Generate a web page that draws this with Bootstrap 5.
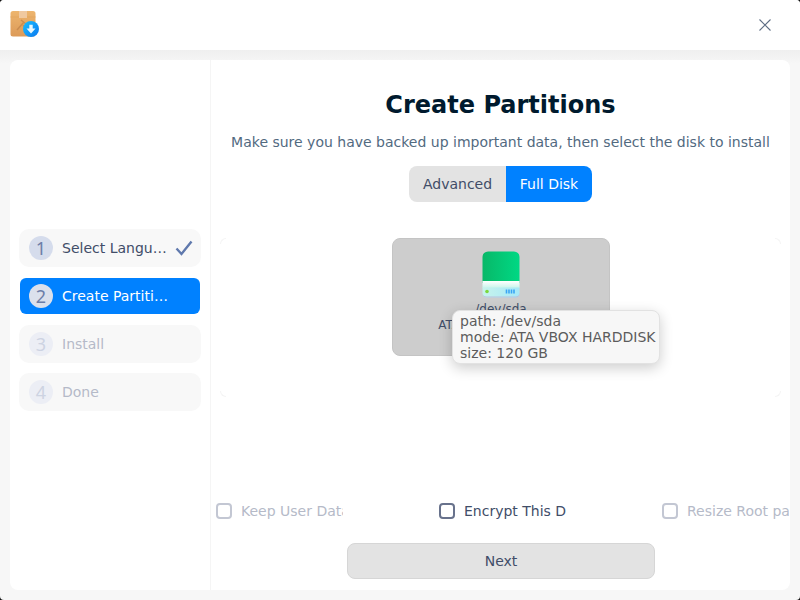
<!DOCTYPE html>
<html lang="en"><head><meta charset="utf-8"><title>Create Partitions</title>
<link href="https://cdn.jsdelivr.net/npm/bootstrap@5.3.0/dist/css/bootstrap.min.css" rel="stylesheet">
<style>
html,body{height:100%;margin:0;background:#111;overflow:hidden}
body{font-family:"DejaVu Sans","Liberation Sans",sans-serif;font-size:14px;color:#414d68}
.win{width:800px;height:600px;background:linear-gradient(#efefef 50px,#f7f7f7 64px);border-radius:4px;overflow:hidden}
.tbar{height:50px;background:#fff;padding-left:10px;padding-right:28px;flex:none}
.panel{margin:10px 10px 10px;height:530px;background:#fff;border-radius:8px;overflow:hidden}
.side{width:201px;border-right:1px solid #f5f5f5;padding:0 9px 10px;gap:10px}
.stp{height:38px;background:#f8f8f8;border-radius:10px;padding-left:10px;flex:none}
.stp.on{background:#0081ff;color:#fff;margin:1px;padding-left:9px;height:36px;border-radius:6px}
.stp.off{color:#b5bac8}
.num{width:24px;height:24px;border-radius:50%;background:#d5dcec;color:#6d7ea8;font-family:"Noto Sans",sans-serif;font-size:18px;line-height:24px;text-align:center;flex:none;margin-right:9px}
.stp.off .num{background:#eceef5;color:#cdd3e2}
.stp.on .num{background:#dbe0ec;color:#6d7ea8}
.lbl{width:106px;white-space:nowrap}
.chk{margin-left:7px}
.main{width:579px;position:relative}
.ttl{font-size:24px;font-weight:700;color:#001a2e;margin:29px 0 0;line-height:32px}
.sub{color:#526a7f;margin:12px 0 0;line-height:18px}
.seg{margin-top:15px;height:36px;border-radius:8px;overflow:hidden}
.seg span{display:block;line-height:36px;height:36px}
.seg .a{background:#e3e3e3;width:97px;text-align:center;color:#414d68}
.seg .b{background:#0081ff;color:#fff;width:86px;text-align:center}
.scroll{margin:36px 9px 0;height:159px;position:relative}
.crn{position:absolute;width:6px;height:6px;border:0 solid #f4f4f4}
.dsk{position:absolute;left:172px;top:0;width:218px;height:118px;background:#cdcdcd;border:1px solid #c4c4c4;border-radius:8px;text-align:center}
.dsk svg{display:block;margin:12px auto 0}
.dn{line-height:16px;margin-top:3px;font-size:12px}
.dn+.dn{margin-top:0}
.tip{position:absolute;left:232px;top:72px;width:208px;height:54px;background:#f7f7f7;border:1px solid #e2e2e2;border-radius:8px;box-shadow:0 4px 14px rgba(0,0,0,.2);color:#5c5c5c;padding:2px 0 0 7px;line-height:16px;white-space:nowrap;overflow:hidden;text-align:left}
.opts{position:absolute;left:5px;top:441px;width:574px}
.opt{width:127px;height:20px;overflow:hidden;white-space:nowrap;flex:none;gap:9px;margin-right:96px}
.opt input.form-check-input{width:16px;height:16px;margin:0;border-radius:4px;border:2px solid #68728c;background-color:transparent;flex:none;opacity:1}
.opt.off{color:#b5bac8}
.opt.off input.form-check-input{border-color:#c3c7d3}
.nxt{position:absolute;left:136px;top:483px;width:308px;height:36px;background:#e3e3e3;border:1px solid #d6d6d6;border-radius:8px;color:#414d68;font-size:14px;padding:0;line-height:34px}
.nxt:hover{background:#e3e3e3;color:#414d68;border-color:#d6d6d6}
</style></head>
<body>
<div class="win d-flex flex-column">
 <div class="tbar d-flex align-items-center justify-content-between">
  <svg width="30" height="30" viewBox="0 0 30 30">
   <defs><linearGradient id="bx" x1="0" y1="0" x2="0" y2="1"><stop offset="0" stop-color="#edb56e"/><stop offset="1" stop-color="#dc9a58"/></linearGradient>
   <linearGradient id="bl" x1="0" y1="0" x2="1" y2="1"><stop offset="0" stop-color="#19c0ff"/><stop offset="1" stop-color="#0a78f0"/></linearGradient></defs>
   <path d="M3 1h20a2.500 2.500 0 0 1 2.500 2.500V24a2.500 2.500 0 0 1-2.500 2.500H3A2.500 2.500 0 0 1 .5 24V3.500A2.500 2.500 0 0 1 3 1z" fill="url(#bx)"/>
   <path d="M.5 7h25" stroke="#e3a65f" stroke-width="1"/>
   <rect x="9" y="1" width="8" height="7" fill="#f0c9a0"/>
   <path d="M7 20l7-8M11 10l5 4M16 19l-3-4" stroke="#bf8249" stroke-width="1.500" fill="none" opacity=".7"/>
   <circle cx="21" cy="19" r="8" fill="url(#bl)"/>
   <path d="M19.300 14.800h3.400v3.600h2.800L21 23.400l-4.500-5h2.800z" fill="#e8f8ff"/>
  </svg>
  <svg width="14" height="14" viewBox="0 0 14 14"><path d="M1.500 1.500l11 11M12.500 1.500l-11 11" stroke="#5f6f86" stroke-width="1.100" fill="none"/></svg>
 </div>
 <div class="panel d-flex">
  <div class="side d-flex flex-column justify-content-center">
   <div class="stp d-flex align-items-center"><span class="num">1</span><span class="lbl">Select Langu…</span>
    <svg class="chk" width="18" height="16" viewBox="0 0 18 16"><path d="M1.500 8.500l5 5.500L16.500 1.500" stroke="#6079ad" stroke-width="2.400" fill="none"/></svg></div>
   <div class="stp on d-flex align-items-center"><span class="num">2</span><span class="lbl">Create Partiti…</span></div>
   <div class="stp off d-flex align-items-center"><span class="num">3</span><span class="lbl">Install</span></div>
   <div class="stp off d-flex align-items-center"><span class="num">4</span><span class="lbl">Done</span></div>
  </div>
  <div class="main d-flex flex-column align-items-center text-center">
   <h1 class="ttl">Create Partitions</h1>
   <p class="sub">Make sure you have backed up important data, then select the disk to install</p>
   <div class="seg d-flex"><span class="a">Advanced</span><span class="b">Full Disk</span></div>
   <div class="scroll align-self-stretch">
    <i class="crn" style="left:0;top:0;border-top-width:1px;border-left-width:1px;border-top-left-radius:8px"></i>
    <i class="crn" style="right:0;top:0;border-top-width:1px;border-right-width:1px;border-top-right-radius:8px"></i>
    <i class="crn" style="left:0;bottom:0;border-bottom-width:1px;border-left-width:1px;border-bottom-left-radius:8px"></i>
    <i class="crn" style="right:0;bottom:0;border-bottom-width:1px;border-right-width:1px;border-bottom-right-radius:8px"></i>
    <div class="dsk">
     <svg width="38" height="47" viewBox="0 0 38 47">
      <defs><linearGradient id="gr" x1="0" y1="0" x2="1" y2="0"><stop offset="0" stop-color="#08b868"/><stop offset="1" stop-color="#00d884"/></linearGradient>
      <linearGradient id="wh" x1="0" y1="0" x2="0" y2="1"><stop offset="0" stop-color="#fff"/><stop offset="1" stop-color="#c8f5ea"/></linearGradient>
      <linearGradient id="cy" x1="0" y1="0" x2="1" y2="0"><stop offset="0" stop-color="#c7f3ec"/><stop offset="1" stop-color="#a6e8f8"/></linearGradient></defs>
      <path d="M6 .5h26a5.500 5.500 0 0 1 5.500 5.500v26H.5V6A5.500 5.500 0 0 1 6 .5z" fill="url(#gr)"/>
      <rect x=".5" y="30" width="37" height="7" fill="url(#wh)"/>
      <path d="M.5 36.500h37v6a4 4 0 0 1-4 4h-29a4 4 0 0 1-4-4z" fill="url(#cy)"/>
      <path d="M.5 42.500a4 4 0 0 0 4 4h29a4 4 0 0 0 4-4v-.5a4 4 0 0 1-4 3.500h-29a4 4 0 0 1-4-3.500z" fill="#b9bfdc"/>
      <circle cx="5" cy="40.500" r="1.800" fill="#7cd83c"/>
      <path d="M24.500 38.500v4M27 38.500v4M29.500 38.500v4M32 38.500v4" stroke="#39a5f5" stroke-width="1.600"/>
     </svg>
     <div class="dn">/dev/sda</div>
     <div class="dn">ATA VBOX HARDDISK</div>
    </div>
    <div class="tip">path: /dev/sda<br>mode: ATA VBOX HARDDISK<br>size: 120 GB</div>
   </div>
   <div class="opts d-flex text-start">
    <label class="opt off d-flex align-items-center"><input class="form-check-input" type="checkbox" disabled>Keep User Data</label>
    <label class="opt d-flex align-items-center"><input class="form-check-input" type="checkbox">Encrypt This Disk</label>
    <label class="opt off d-flex align-items-center"><input class="form-check-input" type="checkbox" disabled>Resize Root partition</label>
   </div>
   <button class="btn nxt" type="button">Next</button>
  </div>
 </div>
</div>
<script src="https://cdn.jsdelivr.net/npm/bootstrap@5.3.0/dist/js/bootstrap.bundle.min.js"></script>
</body></html>
